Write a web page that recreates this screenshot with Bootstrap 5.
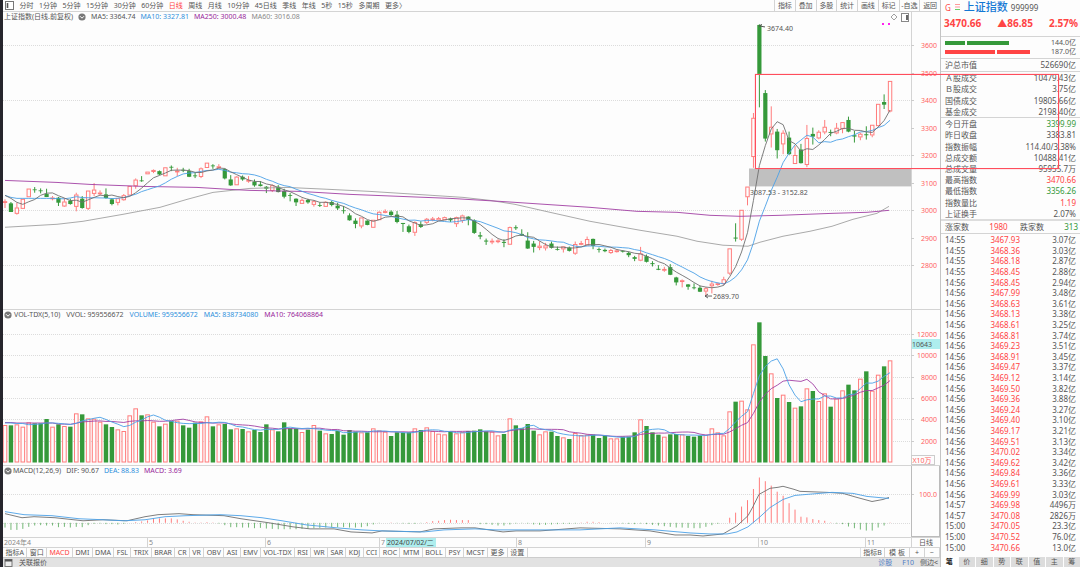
<!DOCTYPE html>
<html lang="zh-CN">
<head>
<meta charset="utf-8">
<meta name="viewport" content="width=device-width, initial-scale=1">
<title>上证指数 999999</title>
<link href="https://cdn.jsdelivr.net/npm/bootstrap@5.3.0/dist/css/bootstrap.min.css" rel="stylesheet">
<style>
:root{--ink:#555;--line:#d4d4d4;--up:#ff4444;--down:#35993a;--blue:#2e90dc;--purple:#99279b}
body{font-family:"Noto Sans","Noto Sans CJK SC",sans-serif;font-size:7px;line-height:9px;color:var(--ink);background:#fdfdfd;border-left:3px solid #26252c}
button,a{font:inherit;color:inherit;text-decoration:none;background:none;border:0;padding:0;white-space:nowrap}
.up{color:var(--up)}.down{color:var(--down)}.blue{color:var(--blue)}.purple{color:var(--purple)}.pale{color:#888}
.terminal{min-height:100vh}
.topbar{height:12px;border-bottom:1px solid var(--line);line-height:11px}
.periods{width:43%;padding-left:2px}
.tools{width:166px}
.tools button{border-left:1px solid var(--line);flex:1 1 0}
.pane{min-height:0;border-bottom:1px solid var(--line)}
.pane svg.plot{position:absolute;inset:0;width:100%;height:100%}
.pane-price{flex:299 1 0}.pane-vol{flex:156 1 0}.pane-macd{flex:71 1 0}
.legend-row{position:relative;z-index:1;gap:5px;padding-left:1px;line-height:10px;white-space:nowrap}
.legend-row svg,.topbar svg,.statusbar svg{flex:none}
.pane-vol .legend-row{gap:6px}
.legend-row svg:first-child{margin-right:-4px}
.dates{height:9px}
.months{display:grid;grid-template-columns:144fr 118fr 114fr 137fr 129fr 113fr 107fr 46fr;color:#888}
.months span{border-left:1px solid var(--line);padding-left:1px;white-space:nowrap}
.months span:first-child{border-left:0}
.months mark{background:#aeeeee;color:#444;padding:0 2px 0 1px;margin-left:1px;font-size:7px}
.axis-cell{width:29px;border-left:1px solid var(--line);text-align:center}
.tabs{height:10px;border-top:1px solid var(--line)}
.indicators{width:56%}
.indicators button{flex:1 1 auto}
.tabs button{border-right:1px solid var(--line);padding:0 2px}
.tabs .wide{width:25px}.tabs .slim{width:15px}
.statusbar{height:10px;background:#e2e2e2;border-top:1px solid #ccc;padding:0 2px 0 1px;gap:6px}
.quote{width:140px;flex:none;border-left:1px solid #c4c4c4;font-size:8px;line-height:11px}
.rule{border-bottom:1px solid var(--line)}
.quote .inset{padding:0 4px}
.name{font-size:11px;line-height:14px;color:#1478d4;font-weight:500}
.last-price{font-size:10px;line-height:16px;height:23px;padding:1px 2px 0 3px}
.flow{gap:2px}
.flow i{height:4px}
.stats{width:100%;margin:0}
.stats th{font-weight:400}.stats td{text-align:right}
.stats th,.stats td{padding:0}
.market{height:45px}.today{height:101px;line-height:11px}
.breadth{height:15px;line-height:12px;border-top:2px solid #ddd;border-bottom:1px solid var(--line)}
.ticks{flex:1 1 0;min-height:0;margin-top:1px;margin-bottom:4px}
.ticks table{height:100%;line-height:10px}
.ticks td:nth-child(3){width:56px}
.side-tabs{height:10px;gap:1px;font-size:7px;line-height:10px}
.side-tabs button{flex:1 1 0;background:#dcdcdc}
.side-tabs .on{background:#fff;font-weight:700;color:#222}
.range-box{position:absolute;left:69.8%;right:21px;top:13%;height:16.8%;border:1px solid #ff4d5c;box-shadow:0 0 1px #ff8a94;z-index:3;pointer-events:none}
</style>
</head>
<body>
<div class="terminal d-flex position-relative">
  <main class="d-flex flex-column flex-fill overflow-hidden">
    <nav class="topbar d-flex justify-content-between">
      <div class="periods d-flex align-items-center justify-content-between" id="periods">
        <svg width="9" height="9" viewBox="0 0 9 9"><rect x=".5" y=".5" width="8" height="8" fill="#fff" stroke="#777"/><path d="M2.5 2v5" stroke="#555" stroke-width="1.6"/></svg>
      </div>
      <div class="tools d-flex" id="tools"></div>
    </nav>
    <section class="pane pane-price position-relative">
      <div class="legend-row d-flex align-items-center"><span>上证指数(日线.前复权)</span>
        <svg width="8" height="8" viewBox="0 0 8 8"><circle cx="4" cy="4" r="3.6" fill="#777"/><path d="M2 3.2 4 5.2 6 3.2" fill="none" stroke="#fff"/></svg>
        <span>MA5: 3364.74</span><span class="blue">MA10: 3327.81</span><span class="purple">MA250: 3000.48</span><span class="pale">MA60: 3016.08</span></div>
      <svg class="plot" id="price"></svg>
    </section>
    <section class="pane pane-vol position-relative">
      <div class="legend-row d-flex align-items-center">
        <svg width="8" height="8" viewBox="0 0 8 8"><circle cx="4" cy="4" r="3.6" fill="#777"/><path d="M2 3.2 4 5.2 6 3.2" fill="none" stroke="#fff"/></svg>
        <span>VOL-TDX(5,10)</span><span>VVOL: 959556672</span><span class="blue">VOLUME: 959556672</span><span class="blue">MA5: 838734080</span><span class="purple">MA10: 764068864</span></div>
      <svg class="plot" id="vol"></svg>
    </section>
    <section class="pane pane-macd position-relative">
      <div class="legend-row d-flex align-items-center">
        <svg width="8" height="8" viewBox="0 0 8 8"><circle cx="4" cy="4" r="3.6" fill="#777"/><path d="M2 3.2 4 5.2 6 3.2" fill="none" stroke="#fff"/></svg>
        <span>MACD(12,26,9)</span><span>DIF: 90.67</span><span class="blue">DEA: 88.83</span><span class="purple">MACD: 3.69</span></div>
      <svg class="plot" id="macd"></svg>
    </section>
    <div class="dates d-flex">
      <div class="months flex-fill"><span>2024年4</span><span>5</span><span>6</span><span>7<mark>2024/07/02/二</mark></span><span>8</span><span>9</span><span>10</span><span>11</span></div>
      <div class="axis-cell">日线</div>
    </div>
    <div class="tabs d-flex justify-content-between">
      <div class="indicators d-flex" id="indicators"></div>
      <div class="d-flex"><button class="wide border-start">指标B</button><button class="wide">模 板</button><button class="slim">+</button><button class="slim">−</button></div>
    </div>
    <footer class="statusbar d-flex align-items-center">
      <svg width="9" height="8" viewBox="0 0 9 8"><rect x="1" y=".5" width="7" height="7" fill="#eee" stroke="#777"/><path d="M1 1.5h7" stroke="#555" stroke-width="2"/></svg>
      <a href="#">关联报价</a>
      <a href="#" class="ms-auto" style="color:#4d7cc4">诊股</a><a href="#" class="ms-1" style="color:#4d7cc4">F10</a><a href="#">侧边&lt;</a>
    </footer>
  </main>

  <aside class="quote d-flex flex-column">
    <header class="d-flex align-items-center inset" style="gap:3px"><span class="up">G</span>
      <svg width="7" height="8" viewBox="0 0 7 8"><path d="M1 1.5h5M1 4h5" stroke="#f99"/><path d="M1 6.5h5" stroke="#6c6"/></svg>
      <span class="name">上证指数</span><span>999999</span></header>
    <div class="last-price up fw-bold d-flex justify-content-between rule"><span>3470.66</span><span>▲86.85</span><span>2.57%</span></div>
    <div class="rule inset d-flex flex-column" style="height:22px;font-size:7px;line-height:9px;padding-top:1px">
      <div class="d-flex align-items-center flow"><i style="width:20px;background:#35993a"></i><i style="width:42px;background:#35993a"></i><span class="ms-auto">144.0亿</span></div>
      <div class="d-flex align-items-center flow"><i style="width:50px;background:#ff4444"></i><i style="width:33px;background:#ff4444"></i><span class="ms-auto">187.0亿</span></div>
    </div>
    <div class="rule inset d-flex justify-content-between" style="height:13px;line-height:12px"><span>沪总市值</span><span>526690亿</span></div>
    <div class="rule inset"><table class="stats market">
      <tr><th>Ａ股成交</th><td>10479.43亿</td></tr><tr><th>Ｂ股成交</th><td>3.75亿</td></tr>
      <tr><th>国债成交</th><td>19805.66亿</td></tr><tr><th>基金成交</th><td>2198.40亿</td></tr></table></div>
    <div class="inset"><table class="stats today">
      <tr><th>今日开盘</th><td class="down">3399.99</td></tr><tr><th>昨日收盘</th><td>3383.81</td></tr>
      <tr><th>指数振幅</th><td>114.40/3.38%</td></tr><tr><th>总成交额</th><td>10488.41亿</td></tr>
      <tr><th>总成交量</th><td>95955.7万</td></tr><tr><th>最高指数</th><td class="up">3470.66</td></tr>
      <tr><th>最低指数</th><td class="down">3356.26</td></tr><tr><th>指数量比</th><td class="up">1.19</td></tr>
      <tr><th>上证换手</th><td>2.07%</td></tr></table></div>
    <div class="breadth d-flex justify-content-between" style="padding:0 2px 0 4px"><span>涨家数</span><span class="up ms-2">1980</span><span>跌家数</span><span class="down ms-2">313</span></div>
    <div class="ticks inset"><table class="stats"><tbody id="ticks"></tbody></table></div>
    <div class="side-tabs d-flex" id="sideTabs"></div>
  </aside>
  <div class="range-box"></div>
</div>

<script src="https://cdn.jsdelivr.net/npm/bootstrap@5.3.0/dist/js/bootstrap.bundle.min.js"></script>
<script>
const $ = id => document.getElementById(id);
const buttons = (id, names, on) => $(id).insertAdjacentHTML('beforeend',
  names.split(' ').map(n => `<button type="button" class="${n === on ? (id === 'sideTabs' ? 'on' : 'up') : ''}">${n}</button>`).join(''));
buttons('periods', '分时 1分钟 5分钟 15分钟 30分钟 60分钟 日线 周线 月线 10分钟 45日线 季线 年线 5秒 15秒 多周期 更多〉', '日线');
buttons('tools', '指标 叠加 多股 统计 画线 标记 -自选 返回');
buttons('indicators', '指标A 窗口 MACD DMI DMA FSL TRIX BRAR CR VR OBV ASI EMV VOL-TDX RSI WR SAR KDJ CCI ROC MTM BOLL PSY MCST 更多 设置', 'MACD');
buttons('sideTabs', '笔 价 细 势 联 值 主 筹', '笔');

const trades = `14:55 3467.93 3.07亿|14:55 3468.36 3.03亿|14:55 3468.18 2.87亿|14:55 3468.45 2.88亿|14:56 3468.45 2.94亿|14:56 3467.99 3.48亿|14:56 3468.63 3.61亿|14:56 3468.13 3.38亿|14:56 3468.61 3.25亿|14:56 3468.81 3.74亿|14:56 3469.23 3.51亿|14:56 3468.91 3.45亿|14:56 3469.47 3.37亿|14:56 3469.12 3.14亿|14:56 3469.50 3.82亿|14:56 3469.36 3.88亿|14:56 3469.24 3.27亿|14:56 3469.40 3.10亿|14:56 3469.17 3.21亿|14:56 3469.51 3.13亿|14:56 3470.02 3.34亿|14:56 3469.62 3.42亿|14:56 3469.84 3.36亿|14:56 3469.61 3.33亿|14:56 3469.99 3.03亿|14:57 3469.98 4496万|14:57 3470.08 2826万|15:00 3470.05 23.3亿|15:00 3470.52 76.0亿|15:00 3470.66 13.0亿`;
$('ticks').innerHTML = trades.split('|').map(r => { const [t, p, v] = r.split(' ');
  return `<tr><th>${t}</th><td class="up">${p}</td><td>${v}</td></tr>`; }).join('');

// Daily candles: direction, then high, body top, body bottom, low (three units to a chart row, from each block's base)
const blocks = [
[450, 'r150,156,160,176 g158,162,188,188 r160,175,193,196 r148,149,178,178 r118,118,143,143 g113,120,122,130 g117,123,125,132 g118,134,143,143 r140,145,148,153 g143,145,160,170 r146,157,171,173 g148,154,164,166 r130,136,172,186 g140,148,176,178 r124,124,178,182 r101,121,133,140 r123,130,133,137 g117,135,146,148 g146,150,164,168 r146,147,160,168 r134,138,152,154 r109,110,138,138 r87,91,110,118 g80,93,95,97 r66,67,74,75 r60,62,67,71 g63,65,75,77 r53,54,80,80 g48,52,54,65 r55,64,67,80 g55,61,63,68 g58,65,82,83 g70,78,80,86 r54,57,82,86 r40,40,55,56 g44,48,50,58 r44,51,53,58 g57,59,87,90 g77,90,108,109 r80,82,107,108 g78,82,90,94 r80,92,94,100'],
[540, 'g0,7,18,22 g5,15,20,21 g20,22,28,41 r15,18,34,38 g17,22,38,39 g28,35,52,57 g41,47,49,66 g57,58,69,80 r57,62,73,74 g58,62,69,73 r62,66,76,82 g69,77,79,83 r66,68,82,82 g64,68,77,81 g70,79,87,92 g80,93,95,103 g102,108,123,124 g117,124,134,147 r114,115,141,147 g123,124,137,138 r121,122,145,145 r96,98,122,122 r90,96,99,102 g93,97,107,111 g95,106,128,132 g131,131,134,158 g136,141,158,162 r126,129,160,170 g126,135,143,146 r116,119,130,134 r113,118,122,126 r113,117,123,124 r112,114,122,123 g115,118,123,128 r112,114,134,143 r106,109,124,131 g111,112,122,138 g120,123,161,164 g158,168,172,180 g178,184,187,197 r178,185,189,195 r180,184,186,192'],
[600, 'g120,128,131,144 r82,84,136,137 g78,84,87,92 g90,104,109,110 g99,124,148,149 g125,133,143,160 r126,140,146,153 r131,139,147,154 g127,133,146,148 g142,150,152,154 r141,142,150,160 g142,145,155,157 r127,135,163,167 r125,132,134,138 r112,120,138,139 g118,119,140,150 g145,150,152,160 g148,152,156,159 r149,153,161,164 r150,154,156,160 g153,155,157,160 g157,161,168,174 g170,174,179,186 r143,163,184,186 g166,171,188,190 g186,192,195,202 g198,209,212,213 r203,210,213,218 g195,204,227,228 g233,235,250,259 r241,244,248,265 g255,256,263,272 g253,265,267,271 g260,266,278,279 r264,268,277,291 r245,254,261,283 r250,253,255,260 r233,241,254,258 r148,148,223,227'],
[30, 'g642,685,688,697 r601,602,691,695 r532,532,563,588 r310,325,442,475 g43,45,195,293 g241,250,387,396 r290,352,374,414 g358,366,422,447 r362,370,404,434 g366,384,434,436 r409,437,463,464 g403,420,461,462 r346,386,466,473 g354,373,381,405 r362,367,386,389 r331,352,368,374 g360,367,370,380 r340,355,371,374 r337,338,358,371 g321,331,366,368 g364,377,381,399 r369,373,383,392 g350,374,377,390 r345,346,377,383 r282,283,349,350 g254,277,285,298 r213,214,305,308']];
const candles = blocks.flatMap(([base, s]) => s.split(' ').map(c => {
  const [h, a, b, l] = c.slice(1).split(',').map(v => (+v + base) / 3 - 12);
  return {up: c[0] === 'r', h, a, b, l, close: c[0] === 'r' ? a : b}; }));
const volume = [360,361,358,365,352,355,355,342,365,358,363,365,325,328,340,341,350,358,366,373,378,331,310,331,328,350,364,356,348,347,361,368,353,349,334,364,358,357,373,370,372,379,375,381,358,373,379,352,370,371,381,374,360,377,385,387,377,389,375,380,382,382,370,376,380,393,382,383,382,370,375,367,378,386,388,379,385,381,378,377,373,379,380,391,387,340,361,370,357,377,388,379,380,393,397,402,384,390,389,389,399,392,400,400,395,395,382,343,363,382,389,395,388,387,388,393,395,392,390,370,382,391,319,290,287,313,118,52,153,205,279,269,291,308,304,250,258,288,265,305,280,256,239,256,221,199,257,209,184,166].map(v => v / 3 - 5);
const hist = [14,21,21,18,12,8,7,8,8,13,12,14,12,13,7,3,2,4,4,5,3,0,-2,-4,-7,-13,-13,-13,-13,-10,-6,-3,-1,-1,-2,-1,2,7,13,13,14,14,16,15,17,18,19,19,19,19,18,17,16,15,14,13,13,13,14,14,13,10,5,1,0,-1,1,2,3,3,1,-2,-5,-6,-8,-9,-8,-8,-8,0,4,4,6,8,8,5,2,1,2,5,6,6,5,4,3,3,2,-1,-3,-3,-2,0,1,1,2,3,4,2,4,6,8,10,12,14,14,15,16,16,12,7,3,0,-15,-30,-48,-67,-100,-134,-123,-110,-92,-80,-58,-39,-18,-16,-11,-8,-6,-1,2,4,11,16,20,23,23,14,8,-1];
const ma60 = [[5,228],[57,225],[83,222],[123,215],[160,208],[187,200],[213,193],[250,189],[287,188],[330,190],[370,192],[417,195],[463,198],[490,201],[515,205],[550,213],[590,222],[640,231],[677,237],[697,242],[723,246],[748,247],[760,243],[783,237],[810,232],[832,227],[853,220],[877,214],[889,207]];
const ma250 = [[5,181],[57,183],[90,185],[143,187],[197,188],[230,190],[250,191],[300,192],[350,195],[400,197],[450,199],[500,202],[530,204],[590,208],[637,212],[677,213],[710,216],[740,217],[780,216],[833,214],[867,213],[889,211]];
const dif = [[5,514],[22,518],[34,517],[55,518],[83,521],[103,520],[127,521],[145,517],[158,515],[179,514],[193,515],[224,516],[241,519],[269,523],[293,527],[310,529],[334,529],[351,532],[372,533],[382,531],[420,532],[434,529],[461,528],[475,528],[503,532],[516,531],[540,531],[580,528],[620,529],[650,531],[675,535],[690,535],[703,536],[723,534],[737,526],[748,516],[753,507],[759,495],[770,489],[778,488],[783,487],[794,490],[800,492],[827,493],[843,494],[857,498],[872,502],[883,500],[889,498]];
const dea = [[5,512],[24,515],[52,516],[79,519],[103,520],[124,521],[145,520],[165,517],[186,516],[220,515],[241,516],[262,518],[282,521],[306,525],[337,528],[362,530],[382,531],[424,532],[444,530],[475,529],[496,530],[540,530],[580,530],[620,528],[655,530],[690,533],[710,534],[727,534],[737,532],[748,527],[759,518],[770,508],[783,500],[795,496],[807,495],[832,493],[853,494],[867,497],[889,499]];
const avg = (a, n, lead) => a.map((v, i) => i < n - 1 ? lead[Math.min(i, lead.length - 1)] : a.slice(i - n + 1, i + 1).reduce((s, x) => s + x, 0) / n);

const UP = '#ff7c7c', LABEL = '#ff5f5f', DOWN = '#35993a', GREY = '#6f6f6f', BLUE = '#4ba0e6', PURPLE = '#a23fa4';
function surface(id, rows) {
  const el = $(id), W = el.clientWidth, H = el.clientHeight, plot = W - 29, k = H / rows;
  const s = {el, W, plot, out: [], x: r => (r - 3) * plot / 908, cx: i => (2 + i * 5.94) * plot / 908, y: v => v * k};
  s.rect = (x, y, w, h, fill, stroke = 'none') => s.out.push(`<rect x="${x}" y="${y}" width="${w}" height="${Math.max(h, .8)}" fill="${fill}" stroke="${stroke}"/>`);
  s.line = (x1, y1, x2, y2, c, extra = '') => s.out.push(`<path d="M${x1} ${y1}L${x2} ${y2}" stroke="${c}" ${extra}/>`);
  s.poly = (pts, c) => s.out.push(`<polyline points="${pts.map(p => p.join()).join(' ')}" fill="none" stroke="${c}" stroke-width=".9"/>`);
  s.text = (x, y, t, c, end) => s.out.push(`<text x="${x}" y="${y + 3}" fill="${c}" font-size="7" ${end ? 'text-anchor="end"' : ''}>${t}</text>`);
  s.grid = v => s.line(0, Math.round(s.y(v)) + .5, plot, Math.round(s.y(v)) + .5, '#dcdcdc', 'stroke-dasharray="1 1"');
  s.tick = v => s.line(plot, Math.round(s.y(v)) + .5, plot + 3, Math.round(s.y(v)) + .5, '#ccc');
  s.line(plot + .5, 0, plot + .5, H, '#d4d4d4');
  s.done = () => el.innerHTML = s.out.join('');
  return s;
}
function drawPrice() {
  const s = surface('price', 298);
  for (let p = 3600, n = 0; p >= 2800; p -= 100, n++) {
    const v = 33.3 + n * 27.63; if (n % 2 === 0) s.grid(v);
    s.tick(v); s.text(s.W - 3, s.y(v), p, LABEL, true);
  }
  s.rect(s.x(749), s.y(157), s.plot - s.x(749), s.y(18), '#c0c0c0');
  candles.forEach((c, i) => {
    const x = s.cx(i), col = c.up ? UP : DOWN;
    if (c.up) {
      if (c.a - c.h > .5) s.line(x, s.y(c.h), x, s.y(c.a), col);
      if (c.l - c.b > .5) s.line(x, s.y(c.b), x, s.y(c.l), col);
      s.rect(x - 1.7, s.y(c.a) + .3, 3.4, s.y(c.b - c.a) - .6, '#fdfdfd', col);
    } else { s.line(x, s.y(c.h), x, s.y(c.l), col); s.rect(x - 2.1, s.y(c.a), 4.2, s.y(c.b - c.a), col); }
  });
  const close = candles.map(c => c.close), pts = a => a.map((v, i) => [s.cx(i), s.y(v)]);
  const free = a => a.map(([x, y]) => [s.x(x), s.y(y - 12)]);
  s.poly(free(ma60), '#a0a0a0'); s.poly(free(ma250), PURPLE);
  s.poly(pts(avg(close, 10, [184, 186, 187, 187])), BLUE);
  s.poly(pts(avg(close, 5, [184, 187, 191, 193])), GREY);
  const a = s.x(759), b = s.x(705);
  s.line(a, s.y(14), a + 6, s.y(15), '#555'); s.line(a, s.y(14), a + 3, s.y(12.5), '#555');
  s.text(a + 8, s.y(16.5), '3674.40', '#555');
  s.out.push(`<path d="M${b + 7} ${s.y(285)}h-7m3 -2l-3 2l3 2" fill="none" stroke="#555" stroke-width=".9"/>`);
  s.text(b + 8, s.y(285), '2689.70', '#555');
  s.text(s.x(750), s.y(181), '3087.53 - 3152.82', '#555');
  const d = s.plot;
  s.out.push(`<path d="M${d - 17} 2l3 3l-3 3l-3 -3z" fill="none" stroke="#888" stroke-width=".8"/>`);
  s.rect(d - 9.5, 1.5, 7, 8, '#fff', '#888'); s.rect(d - 5, 3, 2, 5, '#666');
  s.rect(d - 29, 11, 2, 2, '#ff22ee'); s.rect(d - 23, 11, 2, 2, '#ff22ee');
  s.done();
}
function drawVolume() {
  const s = surface('vol', 155), base = 152.5;
  for (let n = 0; n < 6; n++) { const v = 24 + n * 21.3; s.grid(v); s.tick(v); s.text(s.W - 3, s.y(v), 12000 - n * 2000, LABEL, true); }
  volume.forEach((v, i) => {
    const x = s.cx(i);
    if (candles[i].up) s.rect(x - 1.8, s.y(v) + .5, 3.6, s.y(base - v) - 1, '#fdfdfd', UP);
    else s.rect(x - 2.2, s.y(v), 4.4, s.y(base - v), DOWN);
  });
  const pts = a => a.map((v, i) => [s.cx(i), s.y(v)]);
  s.poly(pts(avg(volume, 10, [112.5, 112.5, 113])), PURPLE);
  s.poly(pts(avg(volume, 5, [113, 113, 113.5])), BLUE);
  s.rect(s.plot + 1, s.y(29), s.W - s.plot - 1, 10, '#aeeeee'); s.text(s.plot + 1, s.y(29) + 5, '10643', '#555');
  s.rect(s.plot + .5, s.y(145) + .5, 23, 9, '#fdfdfd', '#ccc'); s.text(s.plot + 1.5, s.y(145) + 5, 'X10万', LABEL);
  s.done();
}
function drawMacd() {
  const s = surface('macd', 70);
  s.grid(28); s.grid(56); s.tick(28); s.text(s.W - 3, s.y(28), '100.0', LABEL, true);
  hist.forEach((v, i) => v && s.line(s.cx(i), s.y(56), s.cx(i), s.y(56 + v / 3), v < 0 ? UP : '#74b877'));
  const free = a => a.map(([x, y]) => [s.x(x), s.y(y - 467)]);
  s.poly(free(dif), GREY); s.poly(free(dea), BLUE);
  s.rect(s.plot + .5, -.5, s.W - s.plot - 1, s.y(70), 'none', '#bbb');
  s.done();
}
const draw = () => { drawPrice(); drawVolume(); drawMacd(); };
draw(); addEventListener('resize', draw);
</script>
</body>
</html>
